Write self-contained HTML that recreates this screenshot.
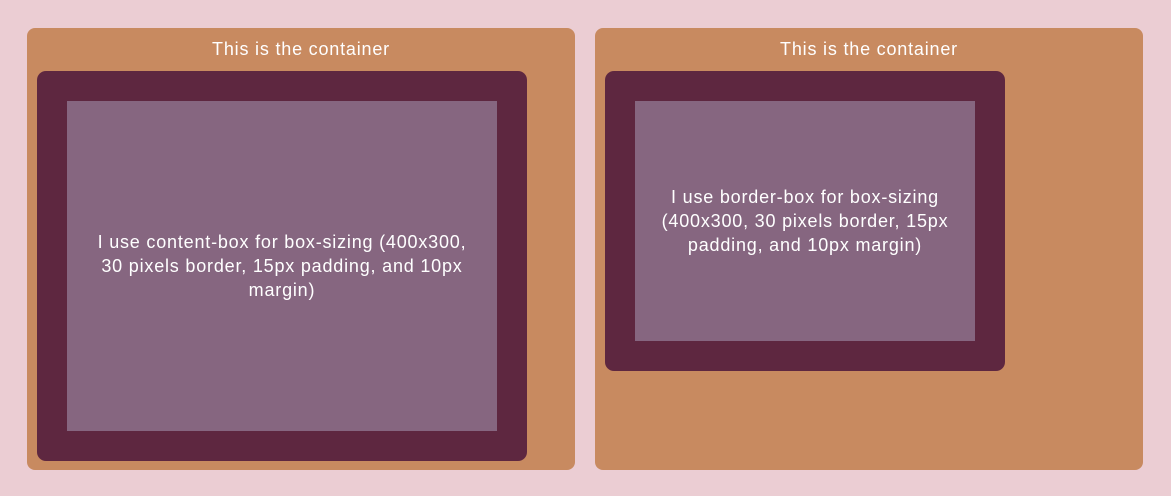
<!DOCTYPE html>
<html><head><style>
body{margin:0;width:1171px;height:496px;background:#ebcdd3;font-family:"Liberation Sans",Arial,sans-serif;position:relative;overflow:hidden}
.c{position:absolute;top:28px;width:548px;height:442px;background:#c88a60;border-radius:8px}
.h{position:absolute;top:38px;left:0;width:100%;text-align:center;color:#fff;font-size:18px;letter-spacing:0.8px;line-height:22px}
.b{position:absolute;top:71px;border-radius:9px;background:#5e2740}
.i{position:absolute;left:30px;top:30px;background:#866680;display:flex;align-items:center;justify-content:center;text-align:center;color:#fff;font-size:18px;letter-spacing:0.8px;line-height:24px;white-space:nowrap}
</style></head><body>
<div class="c" style="left:27px"></div>
<div class="c" style="left:595px"></div>
<div class="h" style="left:27px;width:548px">This is the container</div>
<div class="h" style="left:595px;width:548px">This is the container</div>
<div class="b" style="left:37px;width:490px;height:390px"><div class="i" style="width:430px;height:330px">I use content-box for box-sizing (400x300,<br>30 pixels border, 15px padding, and 10px<br>margin)</div></div>
<div class="b" style="left:605px;width:400px;height:300px"><div class="i" style="width:340px;height:240px">I use border-box for box-sizing<br>(400x300, 30 pixels border, 15px<br>padding, and 10px margin)</div></div>
</body></html>
